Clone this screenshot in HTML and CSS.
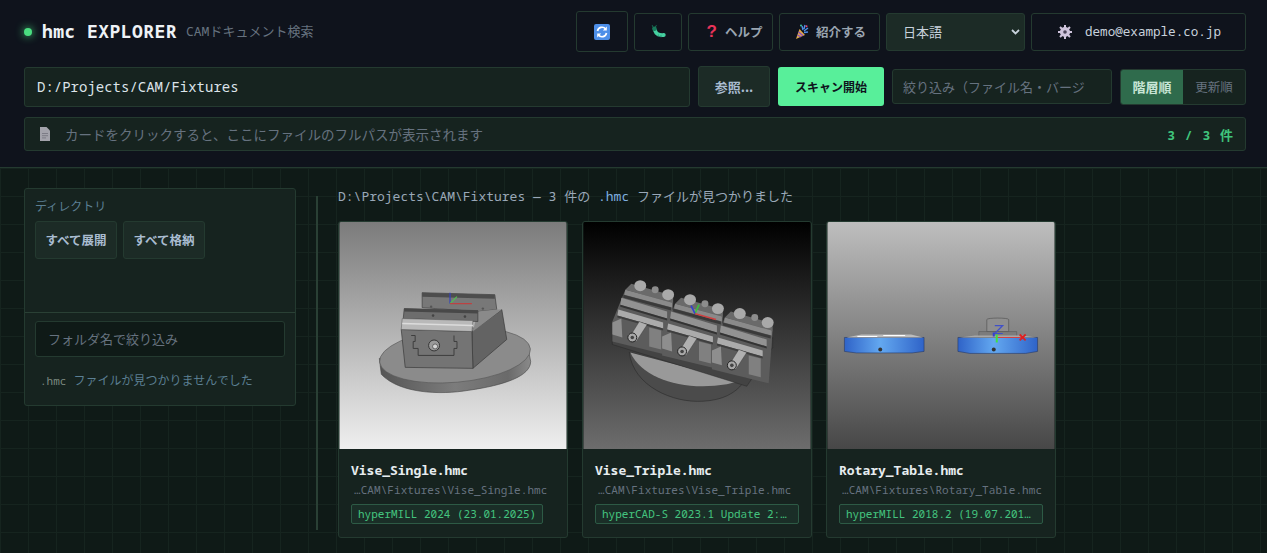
FILE: index.html
```html
<!DOCTYPE html>
<html>
<head>
    <title>hmc EXPLORER</title>
    <meta name="viewport" content="width=device-width, initial-scale=1.0">
    <link rel="stylesheet" href="styles.css">
</head>
<body>
    <header class="top">
        <div class="row row-title">
            <div class="brand">
                <span class="dot"></span>
                <span class="logo">hmc EXPLORER</span>
                <span class="sub">CAMドキュメント検索</span>
            </div>
            <div class="tools">
                <button class="btn btn-sync" title="sync">
                    <svg width="16" height="16" viewBox="0 0 16 16"><rect width="16" height="16" rx="2" fill="#4d8fe8"/><path d="M3.5 7A4.6 4.6 0 0 1 11.6 5" fill="none" stroke="#fff" stroke-width="1.7"/><path d="M12.8 2.6v4h-4z" fill="#fff"/><path d="M12.5 9A4.6 4.6 0 0 1 4.4 11" fill="none" stroke="#fff" stroke-width="1.7"/><path d="M3.2 13.4v-4h4z" fill="#fff"/></svg>
                </button>
                <button class="btn btn-bug" title="bug">
                    <svg width="15" height="13" viewBox="0 0 15 13"><path d="M4 5.5C5 8.5 8 10.5 12.8 10" fill="none" stroke="#45d0a0" stroke-width="3.8" stroke-linecap="round"/><circle cx="3.4" cy="3.8" r="2.3" fill="#17795a"/><path d="M2 2L1.2 .2M4.4 2L5.4 .2" stroke="#17795a" stroke-width=".9"/><path d="M7 11.8L7.5 9.5M10 12.3L10 10" stroke="#2a9a78" stroke-width=".8"/></svg>
                </button>
                <button class="btn btn-help"><span class="mark">?</span>ヘルプ</button>
                <button class="btn btn-intro">
                    <svg width="14" height="16" viewBox="0 0 14 16"><path d="M1 15L4.5 5 10 11z" fill="#e0a84a"/><path d="M2.5 11L6 13M3.6 8L8 11.8" stroke="#8a4fc0" stroke-width="1.4"/><path d="M7 2l1 4M10 1l-1 4M13 4L9 7M13 8l-4 .5" stroke="#4d8fe8" stroke-width="1.4"/><circle cx="11.5" cy="2.2" r="1" fill="#e8487a"/><circle cx="6" cy="1.5" r="1" fill="#3fbf9b"/></svg>
                    紹介する
                </button>
                <div class="lang">
                    <span>日本語</span>
                    <svg width="9" height="6" viewBox="0 0 9 6"><path d="M1 1l3.5 3.5L8 1" fill="none" stroke="#c8d2dc" stroke-width="1.8"/></svg>
                </div>
                <button class="btn btn-user">
                    <svg class="gear" width="14" height="14" viewBox="0 0 14 14"><circle cx="7" cy="7" r="3.6" fill="none" stroke="#cfc4dc" stroke-width="3"/><path d="M7 0v14M0 7h14M2 2l10 10M12 2L2 12" stroke="#cfc4dc" stroke-width="2"/><circle cx="7" cy="7" r="1.8" fill="#4a4458"/></svg>
                    <span class="mail">demo@example.co.jp</span>
                </button>
            </div>
        </div>

        <div class="row row-path">
            <div class="field path-field">D:/Projects/CAM/Fixtures</div>
            <button class="btn-dark browse">参照...</button>
            <button class="scan">スキャン開始</button>
            <div class="filter">絞り込み（ファイル名・バージ</div>
            <div class="seg">
                <span class="seg-item on">階層順</span>
                <span class="seg-item">更新順</span>
            </div>
        </div>

        <div class="pathbar">
            <svg width="12" height="14" viewBox="0 0 12 14"><path d="M1 0h6.5L11 3.5V14H1z" fill="#a3a3ab"/><path d="M3 6.5h6M3 8.7h6M3 10.9h4" stroke="#7c7c86" stroke-width="1"/></svg>
            <span class="hint">カードをクリックすると、ここにファイルのフルパスが表示されます</span>
            <span class="count">3 / 3 件</span>
        </div>
    </header>

    <main class="main">
        <aside class="side">
            <div class="side-top">
                <div class="side-label">ディレクトリ</div>
                <div class="side-btns">
                    <button class="btn-dark small">すべて展開</button>
                    <button class="btn-dark small">すべて格納</button>
                </div>
            </div>
            <div class="side-bottom">
                <div class="folder-input">フォルダ名で絞り込み</div>
                <div class="none"><span class="ext">.hmc</span> ファイルが見つかりませんでした</div>
            </div>
        </aside>
        <div class="split"></div>
        <section class="results">
            <div class="status">D:\Projects\CAM\Fixtures — 3 件の <span class="ext2">.hmc</span> ファイルが見つかりました</div>
            <div class="cards">
                <article class="card">
                    <svg class="thumb" viewBox="0 0 228 228">
                        <defs>
                            <linearGradient id="bg1" x1="0" y1="0" x2="0" y2="1"><stop offset="0" stop-color="#7b7b7b"/><stop offset="1" stop-color="#efefef"/></linearGradient>
                            <linearGradient id="rim1" x1="0" y1="0" x2="1" y2="0"><stop offset="0" stop-color="#555"/><stop offset=".5" stop-color="#7c7c7c"/><stop offset=".85" stop-color="#6a6a6a"/><stop offset="1" stop-color="#8a8a8a"/></linearGradient>
                        </defs>
                        <rect width="228" height="228" fill="url(#bg1)"/>
                        <path d="M40 137L42 153C60 172 100 174 130 169C165 164 192 155 192 140L190 130z" fill="url(#rim1)" stroke="#444" stroke-width=".6"/>
                        <ellipse cx="116" cy="134" rx="76" ry="27" transform="rotate(-5 116 134)" fill="#8b8b8b" stroke="#555" stroke-width=".6"/>
                        <path d="M133 110L163 88L168 118L134 147z" fill="#636363" stroke="#3a3a3a" stroke-width=".7"/>
                        <path d="M62 108L133 110L134 147L66 146z" fill="#747474" stroke="#3a3a3a" stroke-width=".7"/>
                        <path d="M83 71L156 73L158 88L139 90L83 86z" fill="#787878" stroke="#333" stroke-width=".6"/>
                        <path d="M83 71L156 73V77L83 75z" fill="#4d4d4d"/>
                        <path d="M139 90L158 88L163 88L134 110z" fill="#8a8a8a"/>
                        <path d="M65 87L139 89L139 100L64 97z" fill="#6d6d6d" stroke="#333" stroke-width=".6"/>
                        <path d="M65 87L139 89V92L65 90z" fill="#484848"/>
                        <path d="M63 97L134 99L133 110L62 108z" fill="#b9b9b9" stroke="#555" stroke-width=".5"/>
                        <path d="M63 102L134 104" stroke="#dcdcdc" stroke-width="1.4"/>
                        <path d="M72 114H76V120H74V127H79V134H115V127H118V120H115V114" fill="none" stroke="#3d3d3d" stroke-width="1"/>
                        <circle cx="95" cy="124" r="5.5" fill="#9a9a9a" stroke="#333"/>
                        <circle cx="96" cy="125" r="2.5" fill="#d5d5d5" stroke="#444" stroke-width=".7"/>
                        <circle cx="94" cy="94" r="1.3" fill="#444"/><circle cx="126" cy="95" r="1.3" fill="#444"/><circle cx="92" cy="85" r="1.2" fill="#555"/><circle cx="144" cy="87" r="1.2" fill="#555"/>
                        <path d="M111 82V71" stroke="#3340c0" stroke-width="1.2"/>
                        <path d="M111 82L118 75" stroke="#50c050" stroke-width="1.2"/>
                        <path d="M111 82H133" stroke="#c04040" stroke-width="1.2"/>
                    </svg>
                    <div class="card-body">
                        <div class="name">Vise_Single.hmc</div>
                        <div class="fpath">…CAM\Fixtures\Vise_Single.hmc</div>
                        <div class="tag">hyperMILL 2024 (23.01.2025)</div>
                    </div>
                </article>
                <article class="card">
                    <svg class="thumb" viewBox="0 0 228 228">
                        <defs>
                            <linearGradient id="bg2" x1="0" y1="0" x2="0" y2="1"><stop offset="0" stop-color="#000"/><stop offset="1" stop-color="#6d6d6d"/></linearGradient>
                            <g id="unit">
                                <path d="M6 -6L48 6V14L0 0z" fill="#6a6a6a"/>
                                <ellipse cx="15" cy="-4" rx="6" ry="5.5" fill="#a9a9a9"/><ellipse cx="43" cy="5" rx="6" ry="5.5" fill="#a9a9a9"/><circle cx="30" cy="0" r="3.5" fill="#8d8d8d"/>
                                <path d="M0 0L48 13L44 66L-13 52L-13 32z" fill="#5c5c5c"/>
                                <path d="M0 0L47 13V18L-1 5z" fill="#8a8a8a"/>
                                <path d="M-2 5L46 18V21L-2 8z" fill="#3a3a3a"/>
                                <path d="M-4 8L42 22V29L-5 15z" fill="#929292"/>
                                <path d="M-5 15L42 29V31L-5 17z" fill="#333"/>
                                <path d="M-7 20L38 33V39L-8 26z" fill="#ababab"/>
                                <path d="M-8 26L38 39V41L-8 28z" fill="#3f3f3f"/>
                                <path d="M-13 33L-4 29L-3 48L-13 45z" fill="#8e8e8e"/>
                                <path d="M24 38L36 41L36 60L24 57z" fill="#808080"/>
                                <path d="M4 48L14 32L22 35L11 52z" fill="#b0b0b0" stroke="#333" stroke-width=".4"/>
                                <circle cx="7" cy="48" r="4.5" fill="#a8a8a8" stroke="#222"/>
                                <circle cx="7" cy="48" r="1.8" fill="#444"/>
                            </g>
                        </defs>
                        <rect width="228" height="228" fill="url(#bg2)"/>
                        <path d="M46 131C50 165 90 182 120 180C140 179 152 172 160 162z" fill="#4b4b4b" stroke="#2b2b2b" stroke-width=".6"/>
                        <path d="M47 131C60 158 100 170 144 163L156 160z" fill="#999"/>
                        <path d="M29 112L164 155L190 118L60 80z" fill="#4f4f4f"/>
                        <path d="M29 113L29 123L164 165L190 126L190 116L164 156z" fill="#434343" stroke="#222" stroke-width=".4"/>
                        <use href="#unit" x="42" y="68"/>
                        <use href="#unit" x="92" y="82"/>
                        <use href="#unit" x="142" y="96"/>
                        <path d="M112 92L116 83" stroke="#3cc03c" stroke-width="1.6"/>
                        <path d="M112 92L108 84" stroke="#3340d0" stroke-width="1.6"/>
                        <path d="M112 92L133 98" stroke="#d04040" stroke-width="1.5"/>
                    </svg>
                    <div class="card-body">
                        <div class="name">Vise_Triple.hmc</div>
                        <div class="fpath">…CAM\Fixtures\Vise_Triple.hmc</div>
                        <div class="tag tag-full">hyperCAD-S 2023.1 Update 2:…</div>
                    </div>
                </article>
                <article class="card">
                    <svg class="thumb" viewBox="0 0 228 228">
                        <defs>
                            <linearGradient id="bg3" x1="0" y1="0" x2="0" y2="1"><stop offset="0" stop-color="#bebebe"/><stop offset="1" stop-color="#474747"/></linearGradient>
                            <linearGradient id="blue" x1="0" y1="0" x2="1" y2="0"><stop offset="0" stop-color="#2f63c8"/><stop offset=".45" stop-color="#63a8f0"/><stop offset="1" stop-color="#2f63c8"/></linearGradient>
                        </defs>
                        <rect width="228" height="228" fill="url(#bg3)"/>
                        <path d="M17 116H97V130L85 131.5H29L17 130z" fill="url(#blue)" stroke="#2a3a60" stroke-width=".6"/>
                        <path d="M19 116L34 113H84L96 116z" fill="#bdbdbd"/>
                        <path d="M30 115H50M56 114H78" stroke="#fff" stroke-width="1.2"/>
                        <circle cx="53" cy="128" r="2" fill="#333"/>
                        <path d="M131 116H211V130L199 132H143L131 130z" fill="url(#blue)" stroke="#2a3a60" stroke-width=".6"/>
                        <path d="M152 110H190V116H152z" fill="#7c7c7c" stroke="#555" stroke-width=".5"/>
                        <path d="M160 98C160 96 182 96 182 98V110H160z" fill="#8f8f8f" stroke="#555" stroke-width=".7"/>
                        <path d="M133 116L148 114H196L210 116z" fill="#a8a8a8"/>
                        <circle cx="167" cy="128" r="2" fill="#333"/>
                        <path d="M168 104H176L168 112H176" fill="none" stroke="#4050c8" stroke-width="1.2"/>
                        <path d="M170 116H196" stroke="#d84040" stroke-width="1"/>
                        <path d="M170 113V121" stroke="#40e040" stroke-width="2"/>
                        <path d="M167 111V115" stroke="#3340d0" stroke-width="2"/>
                        <path d="M193 113L199 119M199 113L193 119" stroke="#e02020" stroke-width="1.8"/>
                    </svg>
                    <div class="card-body">
                        <div class="name">Rotary_Table.hmc</div>
                        <div class="fpath">…CAM\Fixtures\Rotary_Table.hmc</div>
                        <div class="tag tag-full">hyperMILL 2018.2 (19.07.201…</div>
                    </div>
                </article>
            </div>
        </section>
    </main>
</body>
</html>
```

FILE: styles.css
```css
* {
    box-sizing: border-box;
}
html, body {
    height: 100%;
}
body {
    margin: 0;
    background: #0f1a17;
    color: #c8d2dc;
    font-family: "Noto Sans Mono", "Liberation Mono", "Noto Sans CJK JP", monospace;
    overflow: hidden;
}
button {
    font-family: inherit;
    cursor: pointer;
}
.top {
    height: 168px;
    padding: 11px 21px 0 24px;
    background: #0f131c;
    border-bottom: 1px solid #243a30;
}
.row {
    display: flex;
    align-items: center;
}
.row-title {
    height: 41px;
    justify-content: space-between;
}
.brand {
    display: flex;
    align-items: center;
}
.dot {
    width: 8px;
    height: 8px;
    border-radius: 50%;
    background: #4ade80;
    box-shadow: 0 0 8px #4ade80;
    margin-right: 10px;
}
.logo {
    font-size: 18px;
    font-weight: bold;
    letter-spacing: .45px;
    color: #eef2f6;
    margin-right: 9px;
    padding-bottom: 2px;
}
.sub {
    font-size: 13px;
    color: #66727f;
    padding-bottom: 2px;
}
.tools {
    display: flex;
    align-items: center;
    gap: 6px;
}
.btn {
    display: flex;
    align-items: center;
    justify-content: center;
    height: 38px;
    background: #0f131c;
    border: 1px solid #243a30;
    border-radius: 3px;
    color: #9aa5b1;
    font-size: 12.5px;
    font-weight: bold;
}
.btn-sync {
    width: 52px;
    height: 41px;
}
.btn-bug {
    width: 48px;
}
.btn-help {
    width: 85px;
    padding-left: 14px;
}
.mark {
    color: #e8345a;
    font-family: "Liberation Sans", sans-serif;
    font-size: 17px;
    font-weight: bold;
    margin-right: 8px;
}
.btn-intro {
    width: 101px;
    gap: 7px;
    padding-left: 8px;
}
.lang {
    width: 139px;
    height: 38px;
    display: flex;
    align-items: center;
    justify-content: space-between;
    padding: 0 4px 0 16px;
    background: #1c2b26;
    border: 1px solid #243a30;
    border-radius: 3px;
    font-size: 13px;
}
.btn-user {
    width: 215px;
    padding-left: 8px;
    font-weight: normal;
}
.gear {
    margin-right: 13px;
}
.mail {
    font-size: 12.6px;
    color: #c8d2dc;
}
.row-path {
    margin-top: 14px;
    height: 41px;
}
.field {
    height: 40px;
    display: flex;
    align-items: center;
}
.path-field {
    width: 666px;
    padding-left: 12px;
    background: #16231f;
    border: 1px solid #243a30;
    border-radius: 3px;
    font-size: 14px;
    color: #dde4ea;
}
.btn-dark {
    background: #1c2b26;
    border: 1px solid #243a30;
    border-radius: 3px;
    color: #a9bcd0;
    font-size: 12.5px;
    font-weight: bold;
}
.browse {
    width: 72px;
    height: 41px;
    margin-left: 8px;
    font-family: "Noto Sans CJK JP", sans-serif;
    font-size: 13px;
}
.scan {
    width: 106px;
    height: 39px;
    margin-left: 8px;
    background: #58ef9a;
    border: none;
    border-radius: 3px;
    color: #0f131c;
    font-size: 12px;
    font-weight: bold;
}
.filter {
    width: 220px;
    height: 35px;
    margin-left: 8px;
    display: flex;
    align-items: center;
    padding-left: 10px;
    background: #16231f;
    border: 1px solid #243a30;
    border-radius: 3px;
    font-size: 13px;
    color: #66727f;
    white-space: nowrap;
    overflow: hidden;
}
.seg {
    width: 126px;
    height: 36px;
    margin-left: 8px;
    display: flex;
    border: 1px solid #243a30;
    border-radius: 3px;
    background: #16231f;
    overflow: hidden;
}
.seg-item {
    flex: 1;
    display: flex;
    align-items: center;
    justify-content: center;
    font-size: 12.5px;
    color: #66727f;
}
.seg-item.on {
    background: #2f6b4c;
    color: #c9e6d6;
    font-weight: bold;
    font-size: 13px;
}
.pathbar {
    margin-top: 10px;
    height: 34px;
    display: flex;
    align-items: center;
    padding: 0 11px 0 14px;
    background: #16231f;
    border: 1px solid #243a30;
    border-radius: 3px;
}
.hint {
    margin-left: 14px;
    font-size: 13.5px;
    color: #66727f;
    flex: 1;
}
.count {
    font-size: 13px;
    font-weight: bold;
    letter-spacing: 1px;
    color: #3fc47c;
}
.main {
    height: 385px;
    display: flex;
    align-items: flex-start;
    padding: 20px 24px 0;
    background-color: #0f1a17;
    background-image: linear-gradient(#16241f 1px, transparent 1px), linear-gradient(90deg, #16241f 1px, transparent 1px);
    background-size: 28px 28px;
}
.side {
    width: 272px;
    background: #16231f;
    border: 1px solid #243a30;
    border-radius: 3px;
}
.side-top {
    height: 124px;
    padding: 9px 10px 0;
    border-bottom: 1px solid #2a4035;
}
.side-label {
    font-size: 12px;
    line-height: 17px;
    color: #5b7f93;
}
.side-btns {
    display: flex;
    gap: 6px;
    margin-top: 6px;
}
.small {
    width: 82px;
    height: 38px;
    padding-bottom: 3px;
}
.side-bottom {
    padding: 8px 10px 0;
    height: 92px;
}
.folder-input {
    height: 36px;
    display: flex;
    align-items: center;
    padding: 0 0 2px 12px;
    background: #0f1a17;
    border: 1px solid #243a30;
    border-radius: 3px;
    font-size: 13px;
    color: #66727f;
}
.none {
    margin-top: 15px;
    padding-left: 5px;
    font-size: 12px;
    line-height: 17px;
    color: #5b7f93;
}
.ext {
    font-size: 11px;
    color: #7b8a80;
}
.split {
    width: 2px;
    height: 334px;
    margin: 8px 20px 0;
    background: #2a4035;
}
.results {
    flex: 1;
}
.status {
    font-size: 13px;
    line-height: 17px;
    color: #9aa8b8;
}
.ext2 {
    color: #7fb0e0;
}
.cards {
    display: flex;
    gap: 14px;
    margin-top: 16px;
}
.card {
    width: 230px;
    height: 317px;
    background: #16231f;
    border: 1px solid #243a30;
    border-radius: 3px;
    overflow: hidden;
}
.thumb {
    display: block;
    width: 228px;
    height: 227px;
}
.card-body {
    padding: 14px 12px 0;
}
.name {
    font-size: 13px;
    font-weight: bold;
    line-height: 15px;
    color: #e6ecef;
}
.fpath {
    margin-top: 5px;
    padding-left: 3px;
    font-size: 11px;
    letter-spacing: .07px;
    line-height: 14px;
    color: #66727f;
    white-space: nowrap;
}
.tag {
    margin-top: 7px;
    height: 20px;
    line-height: 18px;
    padding: 0 6px;
    width: fit-content;
    background: #1a2e27;
    border: 1px solid #2d5a45;
    border-radius: 2px;
    font-size: 11px;
    color: #44c47f;
    white-space: nowrap;
}
.tag-full {
    width: 204px;
}
```
